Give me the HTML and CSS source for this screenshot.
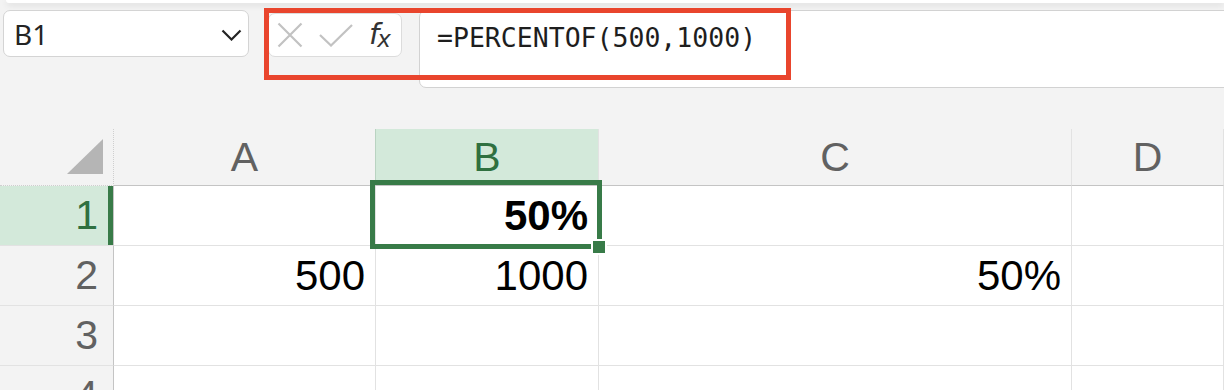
FILE: index.html
```
<!DOCTYPE html>
<html lang="en">
<head>
  <meta charset="UTF-8" />
  <title>PERCENTOF</title>
  <link rel="stylesheet" href="styles.css">
</head>
<body>
  <div class="ribbon-edge"></div>

  <div class="formula-row">
    <div class="name-box">
      <span class="name-ref">B1</span>
      <svg class="chevron" width="21" height="12" viewBox="0 0 21 12"><polyline points="1.5,1.5 10.5,10.5 19.5,1.5" fill="none" stroke="#242424" stroke-width="2.2"/></svg>
    </div>

    <div class="fx-buttons">
      <svg width="26" height="26" viewBox="0 0 26 26"><path d="M1.5 1.5 L24.5 24.5 M24.5 1.5 L1.5 24.5" stroke="#c2c2c2" stroke-width="2.2" fill="none"/></svg>
      <svg width="34" height="23" viewBox="0 0 34 23"><polyline points="1,11 12,21.5 33,1" stroke="#c2c2c2" stroke-width="2.2" fill="none"/></svg>
      <span class="fx"><i class="f">f</i><i class="x">x</i></span>
    </div>

    <div class="formula-box">=PERCENTOF(500,1000)</div>

    <div class="callout"></div>
  </div>

  <div class="sheet">
    <div class="corner">
      <svg width="36" height="35" viewBox="0 0 36 35"><polygon points="36,0 36,35 0,35" fill="#b5b5b5"/></svg>
    </div>
    <div class="col-head">A</div>
    <div class="col-head active">B</div>
    <div class="col-head">C</div>
    <div class="col-head">D</div>

    <div class="row-head active">1</div>
    <div class="cell"></div>
    <div class="cell bold">50%</div>
    <div class="cell"></div>
    <div class="cell"></div>

    <div class="row-head">2</div>
    <div class="cell">500</div>
    <div class="cell">1000</div>
    <div class="cell">50%</div>
    <div class="cell"></div>

    <div class="row-head">3</div>
    <div class="cell"></div>
    <div class="cell"></div>
    <div class="cell"></div>
    <div class="cell"></div>

    <div class="row-head">4</div>
    <div class="cell"></div>
    <div class="cell"></div>
    <div class="cell"></div>
    <div class="cell"></div>

    <div class="selection"><span class="handle"></span></div>
  </div>
</body>
</html>
```

FILE: styles.css
```
*{
  margin:0;
  padding:0;
  box-sizing:border-box;
}

body{
  background:#f3f3f3;
  font-family:"Liberation Sans", Arial, sans-serif;
  overflow:hidden;
  width:1224px;
  height:390px;
}

.ribbon-edge{
  height:3px;
  margin-left:6px;
  background:#fff;
  border-radius:0 0 0 8px;
  box-shadow:0 2px 6px rgba(0,0,0,0.13);
}

/* formula bar */
.formula-row{
  position:relative;
  display:flex;
  align-items:flex-start;
  margin-top:7px;
  padding-left:3px;
  height:78px;
}

.name-box{
  display:flex;
  align-items:center;
  justify-content:space-between;
  width:246px;
  height:47px;
  padding:0 6px 0 10px;
  background:#fff;
  border:1px solid #d4d4d4;
  border-radius:7px;
}

.name-ref{
  font-family:"Noto Sans", "Open Sans", sans-serif;
  font-size:28px;
  color:#242424;
}

.chevron{
  margin-top:2px;
}

.fx-buttons{
  display:flex;
  align-items:center;
  gap:16px;
  margin:3px 0 0 19px;
  width:134px;
  height:44px;
  padding-left:8px;
  background:#fff;
  border:1px solid #dcdcdc;
  border-radius:7px;
}

.fx{
  font-family:"DejaVu Sans", sans-serif;
  color:#333;
  white-space:nowrap;
  margin-top:-2px;
}

.fx .f{
  font-size:29px;
  font-style:italic;
  letter-spacing:-2px;
}

.fx .x{
  font-size:23px;
  font-style:italic;
  position:relative;
  top:3px;
}

.formula-box{
  flex:1;
  margin-left:17px;
  margin-right:-20px;
  height:78px;
  padding:11px 0 0 17px;
  background:#fff;
  border:1.5px solid #d2d2d2;
  border-radius:7px;
  font-family:"DejaVu Sans Mono", monospace;
  font-size:26.5px;
  color:#1e1e1e;
}

.callout{
  position:absolute;
  left:264px;
  top:-2px;
  width:527px;
  height:72px;
  border:5px solid #e9452d;
}

/* sheet */
.sheet{
  position:relative;
  display:grid;
  grid-template-columns:114px 262px 223px 473px 1fr;
  grid-template-rows:57px repeat(4, 60px);
  margin-top:41px;
}

.corner{
  display:flex;
  align-items:flex-end;
  justify-content:flex-end;
  padding:0 10px 11px 0;
  border-right:1px dotted #cfcfcf;
  border-bottom:1px dotted #cfcfcf;
}

.col-head{
  display:flex;
  align-items:center;
  justify-content:center;
  font-size:41px;
  color:#616161;
  border-right:1px solid #e2e2e2;
  border-bottom:1px solid #c4c4c4;
}

.col-head.active{
  background:#d3e9da;
  color:#2f7040;
  border-left:1px solid #b9d3c1;
  margin-left:-1px;
}

.row-head{
  display:flex;
  align-items:center;
  justify-content:flex-end;
  padding-right:15px;
  font-size:41px;
  color:#616161;
  border-right:1px solid #c4c4c4;
  border-bottom:1px solid #e2e2e2;
}

.row-head.active{
  background:#d3e9da;
  color:#2f7040;
  box-shadow:inset -5px 0 0 #387b48;
}

.cell{
  display:flex;
  align-items:center;
  justify-content:flex-end;
  padding-right:10px;
  background:#fff;
  font-size:42px;
  color:#000;
  border-right:1px solid #e2e2e2;
  border-bottom:1px solid #e2e2e2;
}

.cell.bold{
  font-weight:bold;
}

.selection{
  position:absolute;
  left:370px;
  top:51px;
  width:232px;
  height:69px;
  border:5px solid #387b48;
}

.handle{
  position:absolute;
  right:-8px;
  bottom:-9px;
  width:12px;
  height:12px;
  background:#387b48;
  box-shadow:0 0 0 2px #fff;
}
```
